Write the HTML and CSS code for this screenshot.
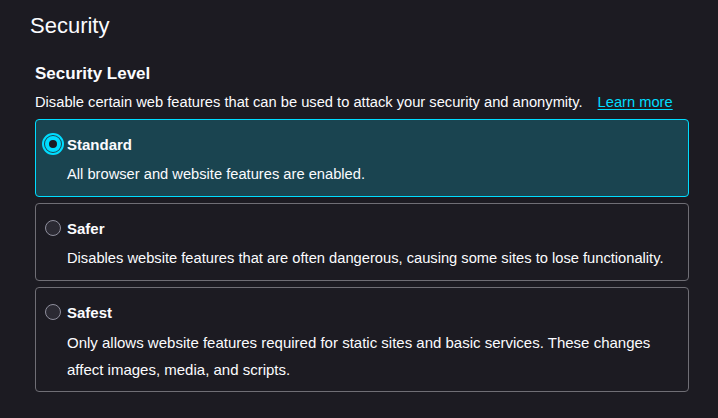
FILE: index.html
```html
<!DOCTYPE html>
<html lang="en">
<head>
<meta charset="utf-8">
<title>Security</title>
<link rel="stylesheet" href="styles.css">
</head>
<body>
<main class="page">
  <h1 class="page-title">Security</h1>
  <section class="section">
    <h2 class="section-title">Security Level</h2>
    <p class="section-desc">Disable certain web features that can be used to attack your security and anonymity.<a class="learn-more" href="#">Learn more</a></p>
    <div class="options">
      <label class="option option-selected">
        <input class="radio radio-focus" type="radio" name="level" checked>
        <span class="option-title">Standard</span>
        <span class="option-desc">All browser and website features are enabled.</span>
      </label>
      <label class="option">
        <input class="radio" type="radio" name="level">
        <span class="option-title">Safer</span>
        <span class="option-desc">Disables website features that are often dangerous, causing some sites to lose functionality.</span>
      </label>
      <label class="option">
        <input class="radio" type="radio" name="level">
        <span class="option-title">Safest</span>
        <span class="option-desc option-desc-wide">Only allows website features required for static sites and basic services. These changes affect images, media, and scripts.</span>
      </label>
    </div>
  </section>
</main>
</body>
</html>
```
FILE: styles.css
```css
html, body {
  margin: 0;
  padding: 0;
  background: #1c1b22;
  color: #fbfbfe;
  font-family: "Liberation Sans", Arial, sans-serif;
}

.page {
  padding: 11px 29px 0 30px;
}

.page-title {
  margin: 0;
  font-size: 22px;
  font-weight: 400;
  line-height: 30px;
}

.section {
  padding-left: 5px;
  margin-top: 21px;
}

.section-title {
  margin: 0;
  font-size: 17px;
  font-weight: 700;
  line-height: 24px;
}

.section-desc {
  margin: 3px 0 0;
  font-size: 14.7px;
  line-height: 27px;
}

.learn-more {
  color: #00ddff;
  margin-left: 15px;
  text-underline-offset: 2px;
}

.options {
  margin-top: 3px;
  display: flex;
  flex-direction: column;
  gap: 6px;
}

.option {
  display: grid;
  grid-template-columns: 16px 1fr;
  column-gap: 6px;
  padding: 11px 8px 8px 9px;
  border: 1px solid #6f6e75;
  border-radius: 4px;
  font-size: 14.7px;
  line-height: 27px;
}

.option-selected {
  background: #1a4450;
  border-color: #00ddff;
}

.radio {
  appearance: none;
  -webkit-appearance: none;
  margin: 0;
  width: 16px;
  height: 16px;
  box-sizing: border-box;
  border-radius: 50%;
  border: 1px solid #8f8f9d;
  background: #2b2a33;
  align-self: center;
  grid-column: 1;
  grid-row: 1;
  position: relative;
  top: -1px;
}

.radio:checked {
  border: 4px solid #00ddff;
  background: #1c1b22;
}

.radio-focus {
  outline: 2px solid #00ddff;
  outline-offset: 1px;
}

.option-title {
  grid-column: 2;
  grid-row: 1;
  font-size: 15px;
  font-weight: 700;
}

.option-desc {
  grid-column: 2;
  grid-row: 2;
  margin-top: 3px;
}

.option-desc-wide {
  font-size: 15px;
}
```
